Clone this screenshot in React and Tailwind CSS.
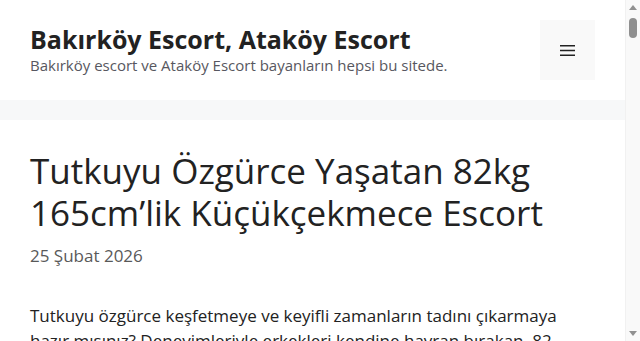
import React from "react";

const Hamburger = () => (
  <svg width="15" height="11" viewBox="0 0 15 11" fill="none" aria-hidden="true">
    <rect x="0" y="0" width="15" height="1.5" fill="#222222" />
    <rect x="0" y="4.75" width="15" height="1.5" fill="#222222" />
    <rect x="0" y="9.5" width="15" height="1.5" fill="#222222" />
  </svg>
);

const Arrow = ({ down }) => (
  <div className="h-[15px] w-[15px] flex items-center justify-center">
    <svg width="8" height="5" viewBox="0 0 8 5" aria-hidden="true">
      <polygon points={down ? "0,0 8,0 4,5" : "0,5 8,5 4,0"} fill="#909090" />
    </svg>
  </div>
);

// browser scrollbar, as it shows in the screenshot
const Scrollbar = () => (
  <div className="w-[15px] shrink-0 flex flex-col items-center bg-[#f9f9f9] border-l border-[#f1f1f1]">
    <Arrow />
    <div className="mt-[3px] w-[8px] h-[20px] rounded-full bg-[#8f8f8f]" />
    <div className="flex-1" />
    <Arrow down />
  </div>
);

export default function App() {
  return (
    <div
      className="h-screen flex overflow-hidden bg-[#f7f8f9] text-[#222222]"
      style={{ fontFamily: '"Open Sans", "Noto Sans", sans-serif' }}
    >
      <div className="flex-1 min-w-0">
        {/* Site header */}
        <header className="bg-white px-[30px] py-5">
          <div className="flex items-center justify-between h-[60px]">
            <div>
              <p className="text-[25px] font-bold leading-[30px] text-[#222222]">
                Bakırköy Escort, Ataköy Escort
              </p>
              <p className="text-[15px] leading-[22.5px] text-[#575760]">
                Bakırköy escort ve Ataköy Escort bayanların hepsi bu sitede.
              </p>
            </div>
            <button className="w-[55px] h-[60px] bg-[#f9f9f9] flex items-center justify-center">
              <Hamburger />
            </button>
          </div>
        </header>

        {/* Post */}
        <main className="mt-5">
          <article className="bg-white px-[30px] pt-[30px] pb-10">
            <h1 className="text-[35px] leading-[42px] font-normal text-[#222222]">
              Tutkuyu Özgürce Yaşatan 82kg 165cm’lik Küçükçekmece Escort
            </h1>
            <p className="mt-[9px] text-[17px] leading-[25.5px] text-[#595959]">
              25 Şubat 2026
            </p>
            <div className="mt-[34px] text-[17px] leading-[25.5px] text-[#222222]">
              <p>
                Tutkuyu özgürce keşfetmeye ve keyifli zamanların tadını çıkarmaya
                hazır mısınız? Deneyimleriyle erkekleri kendine hayran bırakan, 82
                kiloluk ve 165 cm boyundaki Küçükçekmece escort bayan, sıcak
                tavırları ve samimi yaklaşımıyla sizi bekliyor.
              </p>
            </div>
          </article>
        </main>
      </div>
      <Scrollbar />
    </div>
  );
}
